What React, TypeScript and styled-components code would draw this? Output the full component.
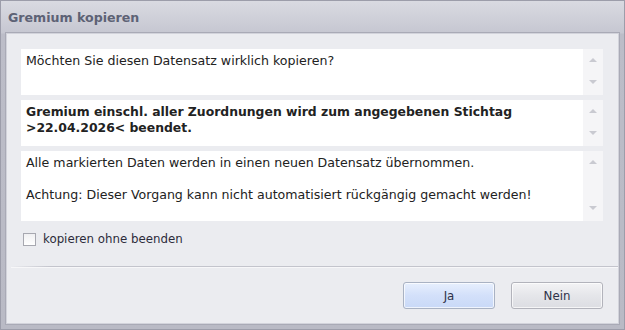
import styled, { createGlobalStyle } from "styled-components";

const GlobalStyle = createGlobalStyle`
  html, body {
    margin: 0;
    padding: 0;
    background: #b9bac5;
  }
  * {
    box-sizing: border-box;
  }
`;

type PanelProps = { $height: number };

function Panel({ height, children }: { height: number; children: React.ReactNode }) {
  return (
    <StPanel $height={height}>
      <StText>{children}</StText>
      <StScroll>
        <StArrowUp />
        <StArrowDown />
      </StScroll>
    </StPanel>
  );
}

function App() {
  return (
    <>
      <GlobalStyle />
      <StWindow>
        <StTitle>Gremium kopieren</StTitle>
        <StBody>
          <StContent>
            <Panel height={46}>Möchten Sie diesen Datensatz wirklich kopieren?</Panel>
            <Panel height={46}>
              <StBold>
                Gremium einschl. aller Zuordnungen wird zum angegebenen Stichtag
                <br />
                &gt;22.04.2026&lt; beendet.
              </StBold>
            </Panel>
            <Panel height={70}>
              Alle markierten Daten werden in einen neuen Datensatz übernommen.
              <br />
              <br />
              Achtung: Dieser Vorgang kann nicht automatisiert rückgängig gemacht werden!
            </Panel>
            <StCheckRow>
              <StCheckbox />
              <span>kopieren ohne beenden</span>
            </StCheckRow>
          </StContent>
          <StSeparator />
          <StFooter>
            <StButton $primary>Ja</StButton>
            <StButton>Nein</StButton>
          </StFooter>
        </StBody>
      </StWindow>
    </>
  );
}

export default App;

const StWindow = styled.div`
  width: 625px;
  height: 330px;
  display: flex;
  flex-direction: column;
  border: 1px solid #9c9daa;
  background: linear-gradient(#d9dae1, #c6c7d1 32px, #bcbdc8 33px, #b9bac5);
  font-family: "DejaVu Sans", "Open Sans", sans-serif;
  font-size: 11.8px;
  color: #222;
`;

const StTitle = styled.div`
  height: 32px;
  padding-left: 7px;
  display: flex;
  align-items: center;
  font-family: "DejaVu Sans", sans-serif;
  font-weight: bold;
  font-size: 12.6px;
  color: #5d6275;
`;

const StBody = styled.div`
  flex: 1;
  margin: 0 5px 5px 5px;
  border: 1px solid #d2d3db;
  outline: 1px solid #a9aab6;
  background: #ebecf0;
  display: flex;
  flex-direction: column;
`;

const StContent = styled.div`
  padding: 15px 15px 20px 14px;
  display: flex;
  flex-direction: column;
  gap: 5px;
`;

const StPanel = styled.div<PanelProps>`
  height: ${(p) => p.$height}px;
  display: flex;
`;

const StText = styled.div`
  flex: 1;
  background: #fff;
  padding: 4px 5px;
  font-size: 12.6px;
  line-height: 16px;
  white-space: nowrap;
`;

const StBold = styled.span`
  font-weight: bold;
  font-size: 12.4px;
`;

const StScroll = styled.div`
  width: 20px;
  background: #f5f5f7;
  display: flex;
  flex-direction: column;
  align-items: center;
  justify-content: space-between;
  padding: 9px 0 11px;
`;

const StArrowUp = styled.div`
  width: 0;
  height: 0;
  border-left: 4px solid transparent;
  border-right: 4px solid transparent;
  border-bottom: 4px solid #c9cad1;
`;

const StArrowDown = styled.div`
  width: 0;
  height: 0;
  border-left: 4px solid transparent;
  border-right: 4px solid transparent;
  border-top: 4px solid #c9cad1;
`;

const StCheckRow = styled.label`
  margin-top: 6px;
  display: flex;
  align-items: center;
  gap: 7px;
  padding-left: 2px;
  color: #2b2b3a;
`;

const StCheckbox = styled.span`
  width: 13px;
  height: 13px;
  border: 1px solid #a7a8b0;
  background: linear-gradient(#f0f0f2, #ffffff);
`;

const StSeparator = styled.div`
  height: 1px;
  margin-left: 4px;
  background: linear-gradient(90deg, rgba(190, 191, 200, 0), #c3c4cc 40px, #c3c4cc);
  box-shadow: 0 1px 0 #f7f7f9;
`;

const StFooter = styled.div`
  flex: 1;
  display: flex;
  justify-content: flex-end;
  align-items: flex-start;
  gap: 16px;
  padding: 15px 15px 0;
`;

const StButton = styled.button<{ $primary?: boolean }>`
  width: 92px;
  height: 27px;
  border-radius: 3px;
  border: 1px solid ${(p) => (p.$primary ? "#a9b2c3" : "#b2b3bb")};
  background: ${(p) =>
    p.$primary
      ? "linear-gradient(#e7effd, #d3e0fa 50%, #c9d9f7)"
      : "linear-gradient(#f3f3f5, #e5e6ea 50%, #dcdde2)"};
  box-shadow: inset 0 0 0 1px rgba(255, 255, 255, 0.7);
  font-family: "DejaVu Sans", "Open Sans", sans-serif;
  font-size: 11.8px;
  color: #2e3248;
  padding: 0;
`;
